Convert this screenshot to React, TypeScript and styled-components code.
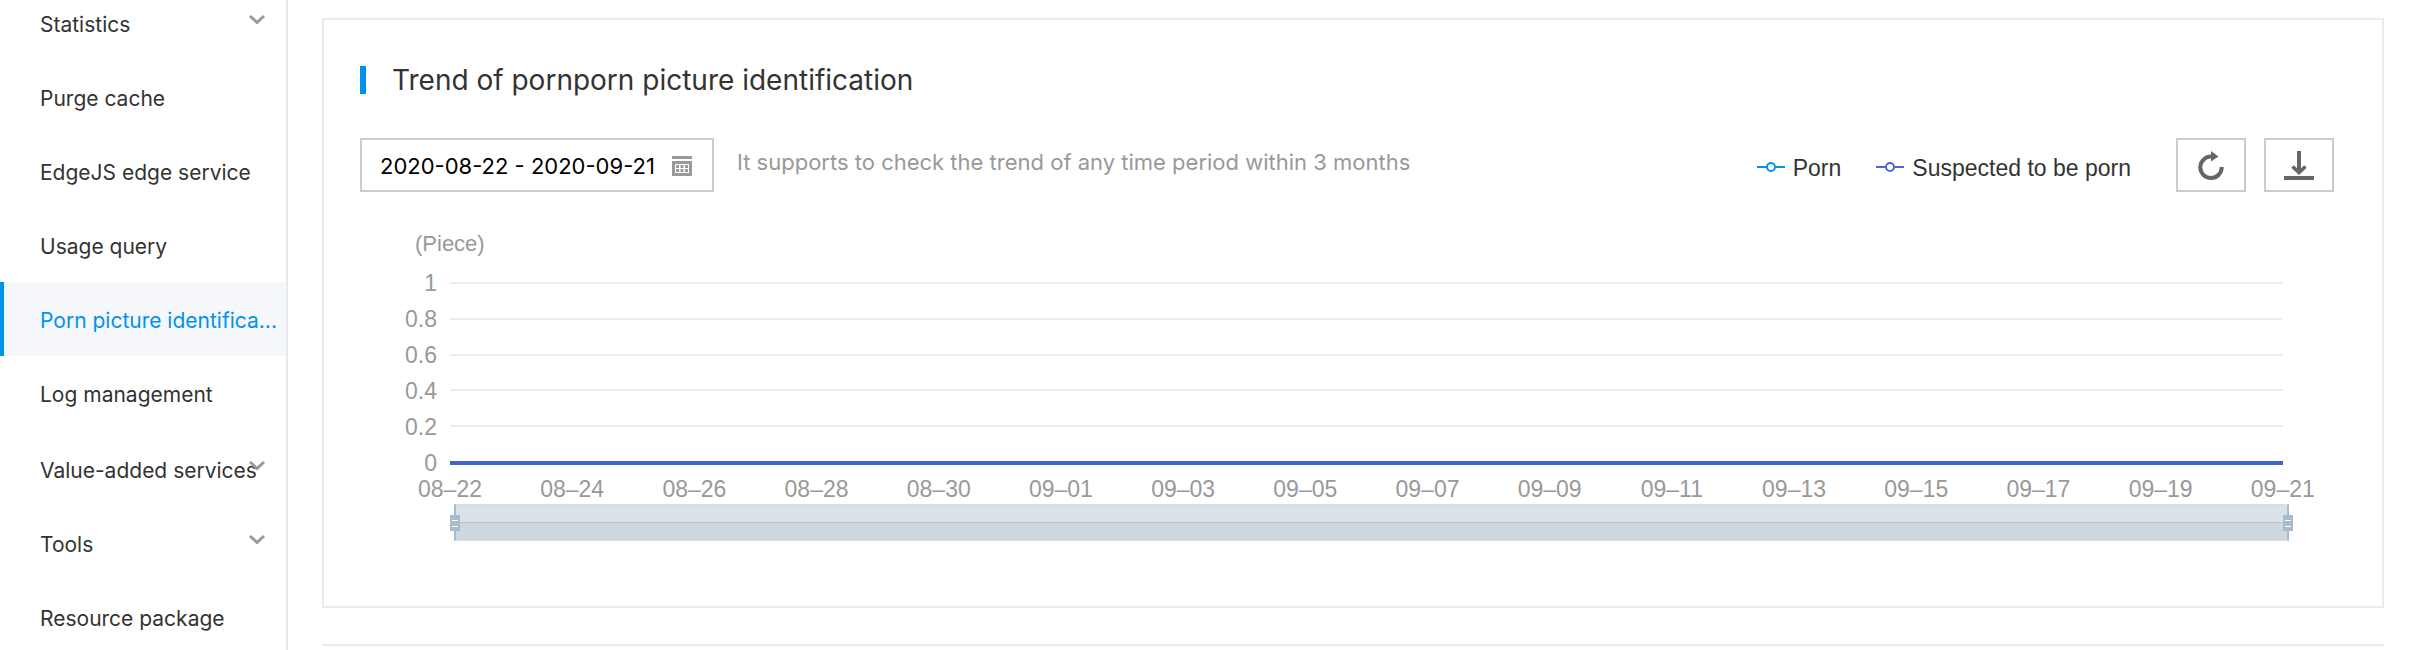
import React, { useState } from "react";
import styled, { createGlobalStyle } from "styled-components";

const GlobalStyle = createGlobalStyle`
  * { box-sizing: border-box; }
  body {
    margin: 0;
    background: #fff;
    color: #333;
    font-family: Inter, "Liberation Sans", sans-serif;
  }
  button, input { font: inherit; color: inherit; }
`;

const Page = styled.div`
  display: flex;
  height: 100vh;
  overflow: hidden;
`;

const Sidebar = styled.nav`
  flex: 0 0 288px;
  min-width: 0;
  border-right: 2px solid #e6e9ed;
`;

const MenuList = styled.ul`
  list-style: none;
  margin: -14px 0 0;
  padding: 0;
`;

const MenuItem = styled.li<{ $spaced?: boolean }>`
  position: relative;
  margin-top: ${(p) => (p.$spaced ? "2px" : "0")};
`;

const MenuLink = styled.a<{ $active?: boolean }>`
  display: block;
  height: 74px;
  padding-left: ${(p) => (p.$active ? "36px" : "40px")};
  border-left: ${(p) => (p.$active ? "4px solid #0093ee" : "0")};
  background: ${(p) => (p.$active ? "#f5f7fb" : "transparent")};
  color: ${(p) => (p.$active ? "#0093ee" : "#333")};
  font-size: 21px;
  line-height: 78px;
  text-decoration: none;
  white-space: nowrap;
`;

const MenuToggle = styled.button`
  display: block;
  width: 100%;
  height: 74px;
  padding: 4px 0 0 40px;
  border: 0;
  background: none;
  font-size: 21px;
  line-height: 70px;
  text-align: left;
  white-space: nowrap;
  cursor: pointer;
`;

const Chevron = styled.svg`
  position: absolute;
  right: 20px;
  top: 28px;
`;

const Main = styled.main`
  flex: 1;
  min-width: 0;
  padding: 18px 30px 0 34px;
`;

const Panel = styled.section`
  border: 2px solid #ebebeb;
  padding: 38px 48px 65px 36px;
`;

const NextPanel = styled.section`
  margin-top: 36px;
  height: 200px;
  border-top: 2px solid #ebebeb;
`;

const Title = styled.h2`
  display: flex;
  align-items: center;
  gap: 26px;
  margin: 0;
  font-size: 28px;
  font-weight: 400;
  line-height: 44px;

  &::before {
    content: "";
    width: 6px;
    height: 28px;
    background: #0093ee;
  }
`;

const Toolbar = styled.div`
  display: flex;
  align-items: center;
  margin-top: 36px;
`;

const DateField = styled.label`
  display: flex;
  align-items: center;
  width: 354px;
  height: 54px;
  padding: 2px 20px 0 18px;
  border: 2px solid #ccc;
`;

const DateInput = styled.input`
  flex: 1;
  min-width: 0;
  padding: 0;
  border: 0;
  outline: 0;
  background: none;
  color: #000;
  font-size: 22px;
`;

const Hint = styled.p`
  margin: 0 auto 6px 23px;
  color: #999;
  font-size: 22px;
  line-height: 28px;
`;

const Legend = styled.div`
  display: flex;
  gap: 35px;
  margin: 6px 45px 0 0;
`;

const LegendItem = styled.button`
  display: flex;
  align-items: center;
  gap: 8px;
  padding: 0;
  border: 0;
  background: none;
  font-family: "Liberation Sans", Arial, sans-serif;
  font-size: 23px;
  line-height: 28px;
  cursor: pointer;
`;

const IconButton = styled.button`
  display: flex;
  align-items: center;
  justify-content: center;
  width: 70px;
  height: 54px;
  padding: 0;
  border: 2px solid #ccc;
  background: #fff;
  cursor: pointer;

  & + & { margin-left: 18px; }
`;

const Chart = styled.figure`
  margin: 38px 51px 0 36px;
  color: #999;
  font-family: "Liberation Sans", Arial, sans-serif;
  font-size: 23px;
  line-height: 28px;
`;

const Unit = styled.figcaption`
  margin-left: 19px;
  font-size: 22px;
`;

const Plot = styled.div`
  display: flex;
  margin-top: 11px;
`;

const YAxis = styled.div`
  display: flex;
  flex-direction: column;
  gap: 8px;
  width: 41px;
  text-align: right;
`;

const Grid = styled.div`
  flex: 1;
  display: flex;
  flex-direction: column;
  justify-content: space-between;
  margin: 13px 0 12px 13px;
`;

const GridLine = styled.div<{ $series?: boolean }>`
  height: ${(p) => (p.$series ? "4px" : "2px")};
  background: ${(p) => (p.$series ? "#4263c8" : "#ededed")};
`;

const XAxis = styled.div`
  display: flex;
  justify-content: space-between;
  margin: -2px 0 0 54px;
`;

const XLabel = styled.span`
  display: flex;
  justify-content: center;
  width: 0;
  white-space: nowrap;
`;

const ZoomBar = styled.div`
  position: relative;
  height: 37px;
  margin: 1px -6px 0 58px;
  border: 1px solid #d9dcdf;
  border-width: 1px 2px;
  border-left-color: #a7bbcd;
  border-right-color: #a7bbcd;
  background: linear-gradient(#dae1e9 17px, #b2c5d1 17px, #b2c5d1 18px, #ced8e0 18px);
`;

const ZoomHandle = styled.input`
  appearance: none;
  position: absolute;
  top: 0;
  left: -6px;
  width: calc(100% + 12px);
  height: 35px;
  margin: 0;
  background: none;
  pointer-events: none;

  &::-webkit-slider-thumb {
    appearance: none;
    width: 10px;
    height: 16px;
    border: 0;
    border-radius: 0;
    background:
      linear-gradient(#fff, #fff) 2px 5px / 6px 1px no-repeat,
      linear-gradient(#fff, #fff) 2px 11px / 6px 1px no-repeat,
      #a7bbcd;
    pointer-events: auto;
    cursor: ew-resize;
  }
`;

type Entry = { label: string; group?: boolean; active?: boolean; spaced?: boolean };

const menu: Entry[] = [
  { label: "Statistics", group: true },
  { label: "Purge cache" },
  { label: "EdgeJS edge service" },
  { label: "Usage query" },
  { label: "Porn picture identifica...", active: true },
  { label: "Log management" },
  { label: "Value-added services", group: true, spaced: true },
  { label: "Tools", group: true },
  { label: "Resource package" },
];

const yTicks = ["1", "0.8", "0.6", "0.4", "0.2", "0"];
const xTicks = [
  "08–22", "08–24", "08–26", "08–28", "08–30", "09–01", "09–03", "09–05",
  "09–07", "09–09", "09–11", "09–13", "09–15", "09–17", "09–19", "09–21",
];

const series = [
  { name: "Porn", color: "#0093ee" },
  { name: "Suspected to be porn", color: "#4d67cf" },
];

const CalendarIcon = () => (
  <svg width="20" height="20" viewBox="0 0 20 20" aria-hidden="true">
    <path d="M0 0h20v3H0z" fill="#999" />
    <path d="M0 5h20v15H0z" fill="#999" />
    <path d="M3 8h14v9H3z" fill="#fff" />
    <path d="M4 9h3v3H4zM8.500 9h3v3h-3zM13 9h3v3h-3zM4 13h3v3H4zM8.500 13h3v3h-3zM13 13h3v3h-3z" fill="#999" />
  </svg>
);

const RefreshIcon = () => (
  <svg width="28" height="30" viewBox="0 0 28 30" fill="none" aria-hidden="true">
    <path d="M14.500 6.600A10.700 10.700 0 1 0 24.700 17" stroke="#666" strokeWidth="4" />
    <path d="M14 1l7.500 5.400L14 11.600z" fill="#666" />
  </svg>
);

const DownloadIcon = () => (
  <svg width="30" height="30" viewBox="0 0 30 30" fill="none" stroke="#666" aria-hidden="true">
    <path d="M15 1v21" strokeWidth="4" />
    <path d="M8.500 16.500L15 22.500l6.500-6" strokeWidth="3.600" />
    <path d="M0 28h30" strokeWidth="4" />
  </svg>
);

const SeriesMark = ({ color }: { color: string }) => (
  <svg width="28" height="12" viewBox="0 0 28 12" fill="none" stroke={color} strokeWidth="2" aria-hidden="true">
    <path d="M0 5h9.500M18.500 5H28" />
    <circle cx="14" cy="5" r="4" />
  </svg>
);

export default function App() {
  const [range, setRange] = useState([0, 30]);
  return (
    <>
      <GlobalStyle />
      <Page>
        <Sidebar aria-label="Console">
          <MenuList>
            {menu.map((m) => (
              <MenuItem key={m.label} $spaced={m.spaced}>
                {m.group ? (
                  <>
                    <Chevron width="18" height="12" viewBox="0 0 18 12" fill="none" aria-hidden="true">
                      <path d="M2 2l7 6.500L16 2" stroke="#999" strokeWidth="3" />
                    </Chevron>
                    <MenuToggle aria-expanded="false">{m.label}</MenuToggle>
                  </>
                ) : (
                  <MenuLink href="#" $active={m.active}>{m.label}</MenuLink>
                )}
              </MenuItem>
            ))}
          </MenuList>
        </Sidebar>
        <Main>
          <Panel>
            <Title>Trend of pornporn picture identification</Title>
            <Toolbar>
              <DateField>
                <DateInput aria-label="Time period" defaultValue="2020-08-22 - 2020-09-21" />
                <CalendarIcon />
              </DateField>
              <Hint>It supports to check the trend of any time period within 3 months</Hint>
              <Legend>
                {series.map((s) => (
                  <LegendItem key={s.name}>
                    <SeriesMark color={s.color} />
                    {s.name}
                  </LegendItem>
                ))}
              </Legend>
              <IconButton aria-label="Refresh"><RefreshIcon /></IconButton>
              <IconButton aria-label="Download"><DownloadIcon /></IconButton>
            </Toolbar>
            <Chart>
              <Unit>(Piece)</Unit>
              <Plot>
                <YAxis>
                  {yTicks.map((t) => <span key={t}>{t}</span>)}
                </YAxis>
                <Grid>
                  {yTicks.map((t) => <GridLine key={t} $series={t === "0"} />)}
                </Grid>
              </Plot>
              <XAxis>
                {xTicks.map((t) => <XLabel key={t}>{t}</XLabel>)}
              </XAxis>
              <ZoomBar>
                {["Start", "End"].map((name, i) => (
                  <ZoomHandle
                    key={name}
                    type="range"
                    min={0}
                    max={30}
                    aria-label={name}
                    value={range[i]}
                    onChange={(e) => {
                      const v = Number(e.target.value);
                      setRange((r) => (i === 0 ? [v, r[1]] : [r[0], v]));
                    }}
                  />
                ))}
              </ZoomBar>
            </Chart>
          </Panel>
          <NextPanel />
        </Main>
      </Page>
    </>
  );
}
